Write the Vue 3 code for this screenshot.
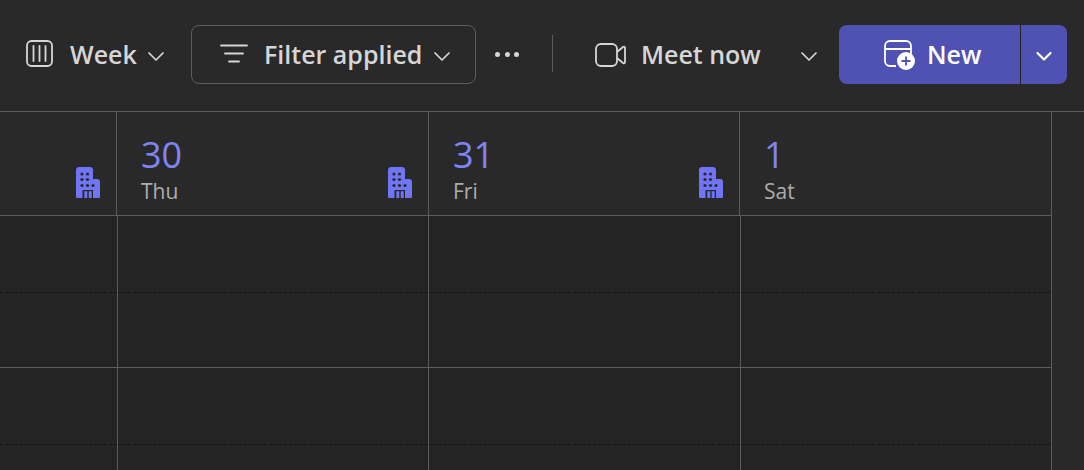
<script setup>
const days = [
  { num: '30', name: 'Thu', icon: true },
  { num: '31', name: 'Fri', icon: true },
  { num: '1', name: 'Sat', icon: false },
]
const rows = [0, 1, 2, 3]
</script>

<template>
  <div class="page">
    <div class="toolbar">
      <button class="tb week">
        <svg class="week-ic" width="27" height="27" viewBox="0 0 27 27" fill="none" stroke="#d6d6d6" stroke-width="1.8">
          <rect x="1" y="1" width="25" height="25" rx="4.5" />
          <path d="M7.500 6v15M13.500 6v15M19.500 6v15" stroke-linecap="round" />
        </svg>
        <span class="label">Week</span>
        <svg class="chev" width="16" height="15" viewBox="0 0 16 15" fill="none" stroke="#d6d6d6" stroke-width="1.700">
          <path d="M1 6l7 7 7-7" stroke-linecap="round" stroke-linejoin="round" />
        </svg>
      </button>
      <button class="tb filter">
        <svg class="filter-ic" width="28" height="19" viewBox="0 0 28 19" fill="none" stroke="#d6d6d6" stroke-width="1.800" stroke-linecap="round">
          <path d="M1 1.500h26M5 9.500h18M9 17.500h10" />
        </svg>
        <span class="label">Filter applied</span>
        <svg class="chev" width="16" height="15" viewBox="0 0 16 15" fill="none" stroke="#d6d6d6" stroke-width="1.700">
          <path d="M1 6l7 7 7-7" stroke-linecap="round" stroke-linejoin="round" />
        </svg>
      </button>
      <div class="more">
        <span class="dot"></span><span class="dot"></span><span class="dot"></span>
      </div>
      <div class="sep"></div>
      <button class="tb meet">
        <svg width="31" height="24" viewBox="0 0 31 24" fill="none" stroke="#d6d6d6" stroke-width="1.800" stroke-linejoin="round">
          <rect x="1" y="1" width="21" height="22" rx="5" />
          <path d="M22 9l6-5c1-.8 2-.3 2 1v14c0 1.300-1 1.800-2 1l-6-5" />
        </svg>
        <span class="label">Meet now</span>
        <svg class="chev" width="16" height="15" viewBox="0 0 16 15" fill="none" stroke="#d6d6d6" stroke-width="1.700">
          <path d="M1 6l7 7 7-7" stroke-linecap="round" stroke-linejoin="round" />
        </svg>
      </button>
      <div class="new">
        <button class="new-main">
          <svg class="new-ic" width="31" height="30" viewBox="0 0 31 30" fill="none" stroke="#fff" stroke-width="1.800">
            <path d="M12 26H6a5 5 0 0 1-5-5V6a5 5 0 0 1 5-5h16a5 5 0 0 1 5 5v9" />
            <path d="M1 9h26" />
            <circle cx="22" cy="21" r="9" fill="#fff" stroke="none" />
            <path d="M22 16.500v9M17.500 21h9" stroke="#4f52b2" stroke-width="1.800" />
          </svg>
          <span class="label">New</span>
        </button>
        <button class="new-drop">
          <svg width="16" height="15" viewBox="0 0 16 15" fill="none" stroke="#fff" stroke-width="2.200">
            <path d="M1.500 6l6.500 6.500L14.500 6" stroke-linecap="round" stroke-linejoin="round" />
          </svg>
        </button>
      </div>
    </div>

    <div class="head">
      <div class="hcell first">
        <svg class="bld" width="24" height="31" viewBox="0 0 24 31">
          <path fill="#7075f5" d="M3 0h11a3 3 0 0 1 3 3v9h4a3 3 0 0 1 3 3v15a1 1 0 0 1-1 1H1a1 1 0 0 1-1-1V3a3 3 0 0 1 3-3Z" />
          <g fill="#292929">
            <circle cx="6" cy="7" r="1.600" /><circle cx="11.500" cy="7" r="1.600" />
            <circle cx="6" cy="12.500" r="1.600" /><circle cx="11.500" cy="12.500" r="1.600" />
            <circle cx="6" cy="18.500" r="1.600" /><circle cx="11.500" cy="18.500" r="1.600" /><circle cx="17" cy="18.500" r="1.600" />
            <path d="M6.500 23H17v8h-1.300v-6.700h-3V31h-1.400v-6.700h-3V31H6.500z" />
          </g>
        </svg>
      </div>
      <div v-for="d in days" :key="d.num" class="hcell">
        <div class="date">
          <div class="num">{{ d.num }}</div>
          <div class="name">{{ d.name }}</div>
        </div>
        <svg v-if="d.icon" class="bld" width="24" height="31" viewBox="0 0 24 31">
          <path fill="#7075f5" d="M3 0h11a3 3 0 0 1 3 3v9h4a3 3 0 0 1 3 3v15a1 1 0 0 1-1 1H1a1 1 0 0 1-1-1V3a3 3 0 0 1 3-3Z" />
          <g fill="#292929">
            <circle cx="6" cy="7" r="1.600" /><circle cx="11.500" cy="7" r="1.600" />
            <circle cx="6" cy="12.500" r="1.600" /><circle cx="11.500" cy="12.500" r="1.600" />
            <circle cx="6" cy="18.500" r="1.600" /><circle cx="11.500" cy="18.500" r="1.600" /><circle cx="17" cy="18.500" r="1.600" />
            <path d="M6.500 23H17v8h-1.300v-6.700h-3V31h-1.400v-6.700h-3V31H6.500z" />
          </g>
        </svg>
      </div>
    </div>

    <div class="body">
      <div v-for="c in 4" :key="c" class="col">
        <div v-for="r in rows" :key="r" class="slot" :class="r % 2 ? 'solid' : 'dashed'"></div>
      </div>
    </div>
  </div>
</template>

<style>
html, body { margin: 0; background: #292929; overflow: hidden; }
</style>

<style scoped>
.page {
  width: 1084px;
  height: 470px;
  overflow: hidden;
  background: #292929;
  font-family: "Open Sans", "Noto Sans", sans-serif;
  color: #d6d6d6;
}
button {
  background: none;
  border: 0;
  padding: 0;
  color: inherit;
  font: inherit;
  display: flex;
  align-items: center;
}
.toolbar {
  height: 109px;
  padding: 0 0 2px 26px;
  border-bottom: 1px solid #5c5c5c;
  display: flex;
  align-items: center;
}
.label { font-size: 25px; font-weight: 600; padding-bottom: 2px; line-height: 34px; }
.week { width: 138px; }
.week-ic { margin: 0 17px 2px 0; }
.week .chev { margin-left: auto; }
.filter {
  margin-left: 27px;
  width: 285px;
  height: 59px;
  box-sizing: border-box;
  border: 1px solid #5c5c5c;
  border-radius: 8px;
  padding: 0 25px 0 28px;
}
.filter-ic { margin: 0 16px 2px 0; }
.filter .chev { margin-left: auto; }
.more { display: flex; gap: 4.500px; margin-left: 19px; }
.dot { width: 5px; height: 5px; border-radius: 50%; background: #d6d6d6; }
.sep { width: 1px; height: 37px; background: #5c5c5c; margin: 0 0 2px 33px; }
.meet { margin-left: 42px; width: 222px; }
.meet svg:first-child { margin-right: 15px; }
.meet .chev { margin-left: auto; }
.new { display: flex; margin-left: 22px; height: 59px; border-radius: 8px; overflow: hidden; background: #4f52b2; color: #fff; }
.new-main { width: 181px; padding-left: 45px; box-sizing: border-box; }
.new-ic { margin-right: 12px; }
.new-drop { width: 47px; justify-content: center; border-left: 1px solid #242424; box-sizing: border-box; }
.head { display: grid; grid-template-columns: 117px 312px 311px 312px; height: 104px; }
.hcell {
  box-sizing: border-box;
  border-right: 1px solid #5c5c5c;
  border-bottom: 1px solid #5c5c5c;
  display: flex;
  justify-content: space-between;
  padding: 0 16px 0 24px;
}
.first { justify-content: flex-end; }
.date { display: flex; flex-direction: column; padding-top: 21px; }
.num { font-size: 36px; line-height: 44px; color: #7f85f5; font-weight: 400; }
.name { font-size: 21px; line-height: 28px; color: #adadad; }
.bld { margin-top: 55px; }
.body { display: grid; grid-template-columns: 118px 311px 312px 311px; width: 1052px; background: #242424; height: 254px; }
.col { box-sizing: border-box; border-right: 1px solid #5c5c5c; }
.slot { box-sizing: border-box; }
.dashed { border-bottom: 1px dashed #141414; height: 77px; }
.solid { border-bottom: 1px solid #5c5c5c; height: 75px; }
</style>
